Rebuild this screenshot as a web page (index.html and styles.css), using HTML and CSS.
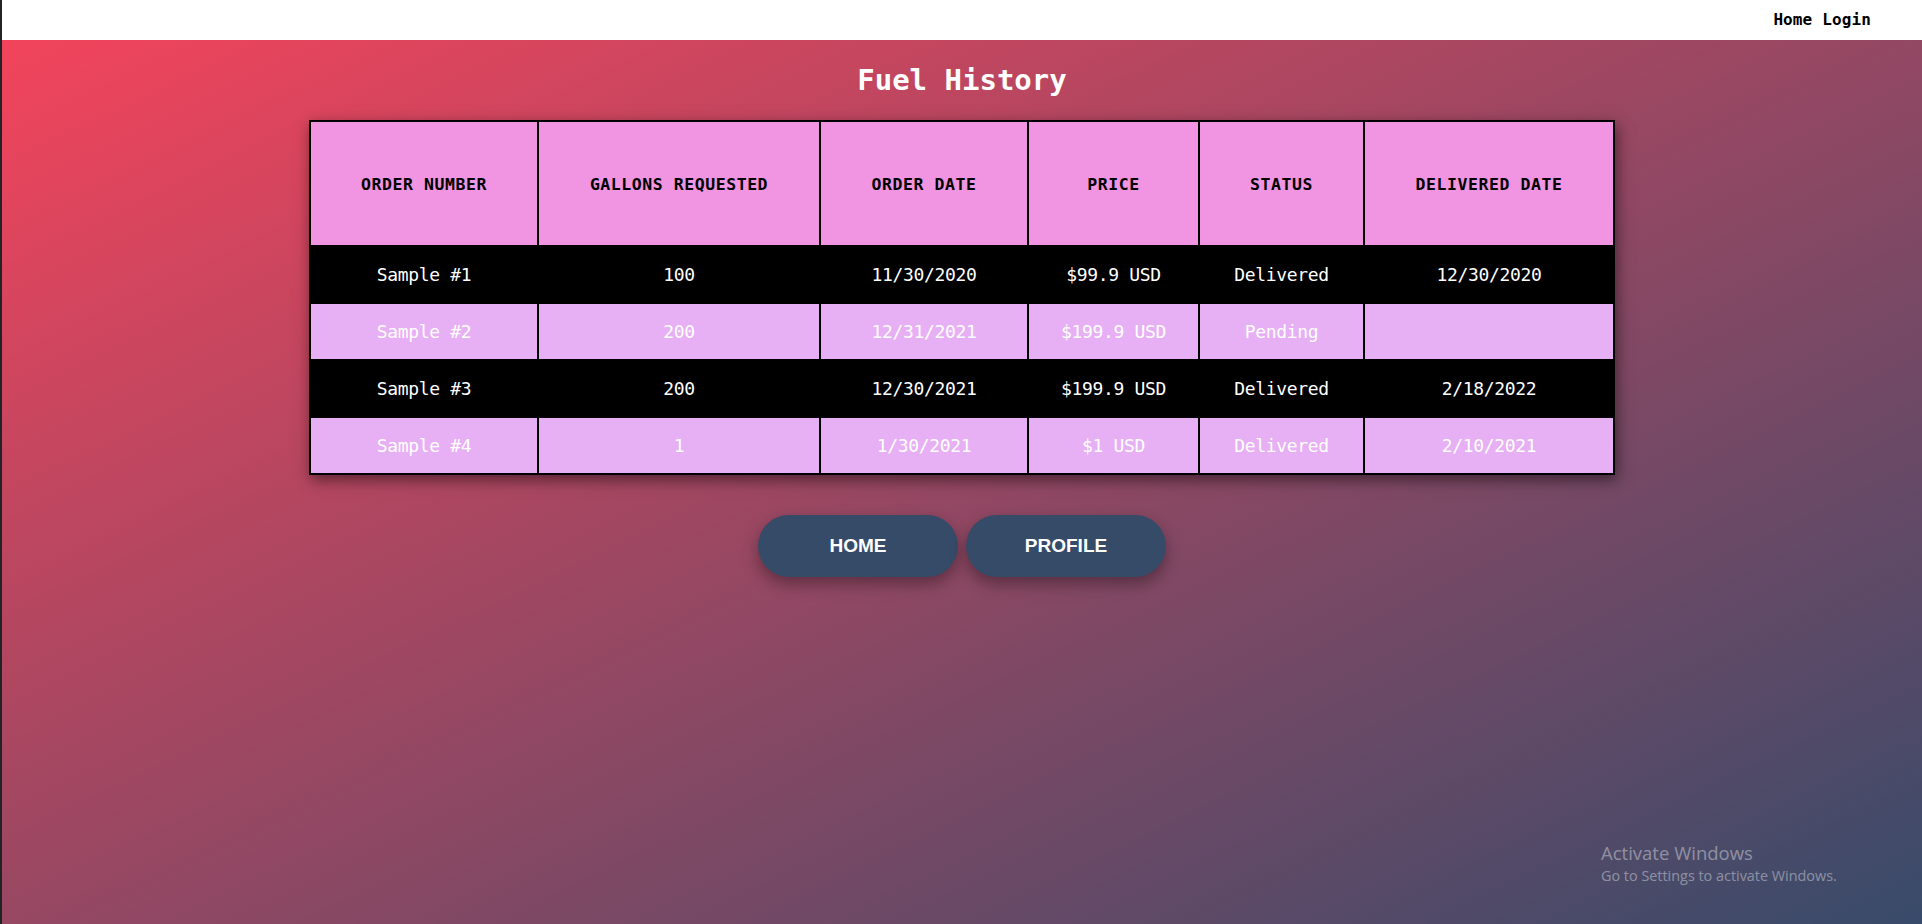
FILE: index.html
```html
<!DOCTYPE html>
<html lang="en">
<head>
<meta charset="utf-8">
<title>Fuel History</title>
<link rel="stylesheet" href="styles.css">
</head>
<body>
  <header class="topbar">
    <nav class="nav">
      <a class="nav-link" href="#">Home</a>
      <a class="nav-link" href="#">Login</a>
    </nav>
  </header>
  <main class="main">
    <h1 class="title">Fuel History</h1>
    <table class="history">
      <thead>
        <tr>
          <th class="c1">ORDER NUMBER</th>
          <th class="c2">GALLONS REQUESTED</th>
          <th class="c3">ORDER DATE</th>
          <th class="c4">PRICE</th>
          <th class="c5">STATUS</th>
          <th class="c6">DELIVERED DATE</th>
        </tr>
      </thead>
      <tbody>
        <tr class="row-dark">
          <td>Sample #1</td><td>100</td><td>11/30/2020</td><td>$99.9 USD</td><td>Delivered</td><td>12/30/2020</td>
        </tr>
        <tr class="row-light">
          <td>Sample #2</td><td>200</td><td>12/31/2021</td><td>$199.9 USD</td><td>Pending</td><td></td>
        </tr>
        <tr class="row-dark">
          <td>Sample #3</td><td>200</td><td>12/30/2021</td><td>$199.9 USD</td><td>Delivered</td><td>2/18/2022</td>
        </tr>
        <tr class="row-light">
          <td>Sample #4</td><td>1</td><td>1/30/2021</td><td>$1 USD</td><td>Delivered</td><td>2/10/2021</td>
        </tr>
      </tbody>
    </table>
    <div class="actions">
      <a class="btn" href="#">HOME</a>
      <a class="btn" href="#">PROFILE</a>
    </div>
  </main>
  <div class="watermark">
    <div class="wm-title">Activate Windows</div>
    <div class="wm-sub">Go to Settings to activate Windows.</div>
  </div>
</body>
</html>
```
FILE: styles.css
```css
* { box-sizing: border-box; }

html, body { margin: 0; padding: 0; }

body {
  min-height: 924px;
  height: 924px;
  overflow: hidden;
  border-left: 2px solid #222327;
  background: linear-gradient(to bottom right, #f6445b 0%, #384b6a 100%);
  font-family: "DejaVu Sans Mono", "Liberation Mono", monospace;
  position: relative;
}

.topbar {
  height: 40px;
  background: #ffffff;
  display: flex;
  justify-content: flex-end;
  align-items: center;
  padding-right: 51px;
}

.nav { display: flex; gap: 10px; }

.nav-link {
  color: #000;
  text-decoration: none;
  font-weight: bold;
  font-size: 16px;
  line-height: 40px;
  letter-spacing: 0.1px;
}

.main {
  display: flex;
  flex-direction: column;
  align-items: center;
  padding-top: 22px;
}

.title {
  margin: 0 0 22px 0;
  font-size: 29px;
  line-height: 36px;
  font-weight: bold;
  color: #ffffff;
}

.history {
  width: 1306px;
  table-layout: fixed;
  border-collapse: separate;
  border-spacing: 2px;
  background: #000;
  box-shadow: 2px 5px 14px rgba(0, 0, 0, 0.5);
}

.history th,
.history td {
  padding: 0;
  text-align: center;
  vertical-align: middle;
}

.history th {
  height: 123px;
  padding-top: 2px;
  background: #f194e1;
  color: #000;
  font-weight: bold;
  font-size: 16.5px;
  letter-spacing: 0.55px;
}

.c1 { width: 226px; }
.c2 { width: 280px; }
.c3 { width: 206px; }
.c4 { width: 169px; }
.c5 { width: 163px; }
.c6 { width: 248px; }

.history td {
  height: 55px;
  color: #ffffff;
  font-size: 18px;
  letter-spacing: -0.33px;
}

.row-dark td { background: #000000; }
.row-light td { background: #e8b0f4; }

.actions {
  display: flex;
  gap: 8px;
  margin-top: 40px;
}

.btn {
  width: 200px;
  height: 62px;
  border-radius: 31px;
  background: #364b67;
  color: #ffffff;
  text-decoration: none;
  font-family: "Liberation Sans", Arial, sans-serif;
  font-weight: bold;
  font-size: 19px;
  display: flex;
  align-items: center;
  justify-content: center;
  box-shadow: 0 7px 16px rgba(0, 0, 0, 0.35);
}

.watermark {
  position: absolute;
  left: 1599px;
  top: 840px;
  color: rgba(255, 255, 255, 0.4);
  font-family: "Open Sans", "Noto Sans", sans-serif;
}

.wm-title {
  font-size: 18.5px;
  line-height: 26px;
}

.wm-sub {
  font-size: 14.4px;
  line-height: 20px;
}
```
